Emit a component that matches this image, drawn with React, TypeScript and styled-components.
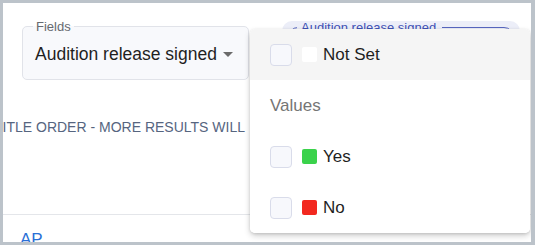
import styled, { createGlobalStyle } from 'styled-components'

const GlobalStyle = createGlobalStyle`
  html, body {
    margin: 0;
    padding: 0;
    background: #bcc3ca;
    font-family: "Liberation Sans", Arial, sans-serif;
  }
`

const Frame = styled.div`
  position: relative;
  margin: 3px 4px 0 3px;
  height: 239px;
  background: #ffffff;
  overflow: hidden;
`

const TopRow = styled.div`
  display: flex;
  align-items: flex-start;
  padding: 17px 0 0 19px;
  gap: 33px;
`

const SelectBox = styled.fieldset`
  margin: 0;
  padding: 0 12px 0 12px;
  width: 227px;
  height: 60px;
  box-sizing: border-box;
  border: 1px solid #e1e3e9;
  border-radius: 5px;
  background: #f8f9fc;
  display: flex;
  align-items: center;
  gap: 6px;
`

const SelectLegend = styled.legend`
  padding: 0 3px;
  margin-left: -2px;
  font-size: 13px;
  color: #666a70;
  line-height: 13px;
`

const SelectValue = styled.span`
  font-size: 17.5px;
  color: #1f1f1f;
  white-space: nowrap;
  margin-top: -3px;
`

const Caret = styled.span`
  width: 0;
  height: 0;
  border-left: 5px solid transparent;
  border-right: 5px solid transparent;
  border-top: 5px solid #6b6b6b;
  margin-top: -3px;
`

const Chip = styled.div`
  width: 238px;
  height: 40px;
  margin-top: 1px;
  border-radius: 10px;
  background: #eceef8;
  padding: 0 6px;
  box-sizing: border-box;
`

const ChipField = styled.fieldset`
  margin: 0;
  padding: 0;
  height: 40px;
  border: 1.5px solid #5867c0;
  border-radius: 10px;
`

const ChipLegend = styled.legend`
  margin-left: 8px;
  padding: 0 6px 0 4px;
  font-size: 13px;
  line-height: 13px;
  color: #3f51b5;
`

const Notice = styled.div`
  width: 252px;
  margin: 39px 0 0 -9px;
  font-size: 14px;
  color: #56657f;
  white-space: nowrap;
  overflow: hidden;
`

const Divider = styled.div`
  margin-top: 79px;
  border-top: 1px solid #e4e6ea;
`

const Link = styled.div`
  margin: 15px 0 0 17px;
  font-size: 17px;
  color: #2a6fd6;
`

const Popup = styled.div`
  position: absolute;
  left: 247px;
  top: 26px;
  width: 280px;
  background: #ffffff;
  border-radius: 5px;
  box-shadow: 0 3px 6px rgba(0, 0, 0, 0.18), 0 1px 3px rgba(0, 0, 0, 0.12);
  overflow: hidden;
`

const Option = styled.div<{ $active?: boolean }>`
  height: 51px;
  display: flex;
  align-items: center;
  padding-left: 20px;
  background: ${p => (p.$active ? '#f5f5f5' : '#ffffff')};
`

const Header = styled.div`
  height: 51px;
  display: flex;
  align-items: center;
  padding-left: 20px;
  font-size: 17px;
  color: #757575;
`

const Checkbox = styled.span`
  width: 22px;
  height: 22px;
  box-sizing: border-box;
  border: 1px solid #d9dcea;
  border-radius: 4px;
  background: #f7f8fc;
  margin-right: 10px;
`

const Swatch = styled.span<{ $color: string }>`
  width: 15px;
  height: 15px;
  border-radius: 2px;
  background: ${p => p.$color};
  margin-right: 6px;
`

const Label = styled.span`
  font-size: 17px;
  color: #1f1f1f;
`

const values = [
  { label: 'Yes', color: '#3ad24b' },
  { label: 'No', color: '#f2281f' },
]

export default function App() {
  return (
    <>
      <GlobalStyle />
      <Frame>
        <TopRow>
          <SelectBox>
            <SelectLegend>Fields</SelectLegend>
            <SelectValue>Audition release signed</SelectValue>
            <Caret />
          </SelectBox>
          <Chip>
            <ChipField>
              <ChipLegend>Audition release signed</ChipLegend>
            </ChipField>
          </Chip>
        </TopRow>
        <Notice>TITLE ORDER - MORE RESULTS WILL LOAD AS YOU SCROLL</Notice>
        <Divider />
        <Link>AP</Link>
        <Popup>
          <Option $active>
            <Checkbox />
            <Swatch $color="#ffffff" />
            <Label>Not Set</Label>
          </Option>
          <Header>Values</Header>
          {values.map(v => (
            <Option key={v.label}>
              <Checkbox />
              <Swatch $color={v.color} />
              <Label>{v.label}</Label>
            </Option>
          ))}
        </Popup>
      </Frame>
    </>
  )
}
